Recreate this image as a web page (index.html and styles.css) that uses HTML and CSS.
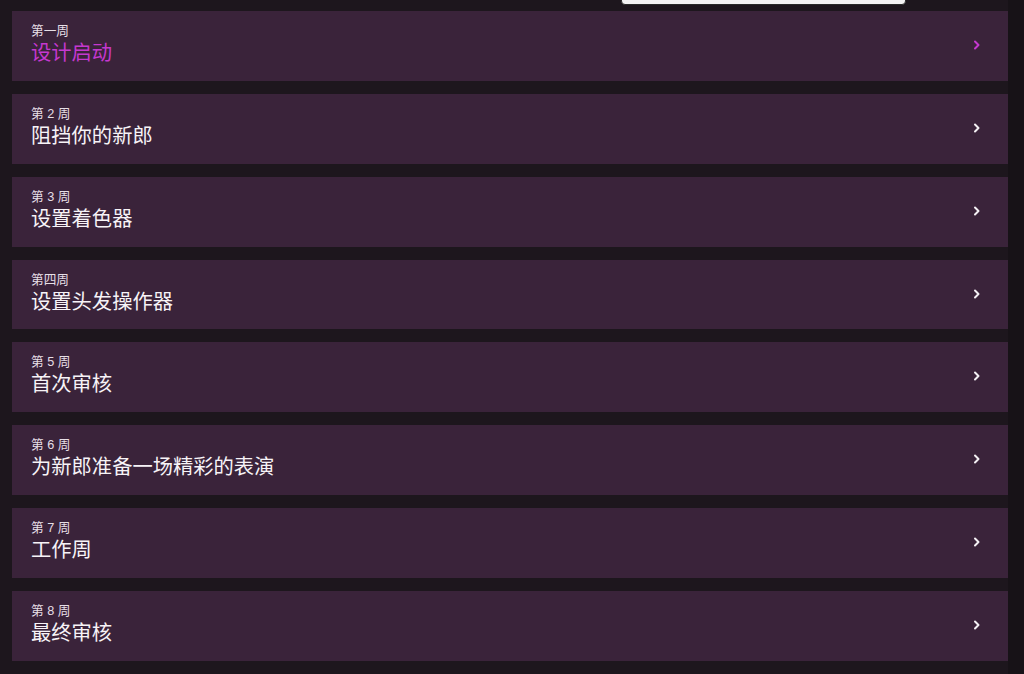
FILE: index.html
```html
<!DOCTYPE html>
<html lang="zh">
<head>
<meta charset="utf-8">
<link rel="stylesheet" href="styles.css">
</head>
<body>
<div class="topbar"></div>
<div class="page">
  <main class="list">
    <a class="item active"><div class="text"><div class="label">第一周</div><div class="title">设计启动</div></div><svg class="chev" viewBox="0 0 8 10"><path d="M2 1.5 L5.5 5 L2 8.5" /></svg></a>
    <a class="item"><div class="text"><div class="label">第 2 周</div><div class="title">阻挡你的新郎</div></div><svg class="chev" viewBox="0 0 8 10"><path d="M2 1.5 L5.5 5 L2 8.5" /></svg></a>
    <a class="item"><div class="text"><div class="label">第 3 周</div><div class="title">设置着色器</div></div><svg class="chev" viewBox="0 0 8 10"><path d="M2 1.5 L5.5 5 L2 8.5" /></svg></a>
    <a class="item"><div class="text"><div class="label">第四周</div><div class="title">设置头发操作器</div></div><svg class="chev" viewBox="0 0 8 10"><path d="M2 1.5 L5.5 5 L2 8.5" /></svg></a>
    <a class="item"><div class="text"><div class="label">第 5 周</div><div class="title">首次审核</div></div><svg class="chev" viewBox="0 0 8 10"><path d="M2 1.5 L5.5 5 L2 8.5" /></svg></a>
    <a class="item"><div class="text"><div class="label">第 6 周</div><div class="title">为新郎准备一场精彩的表演</div></div><svg class="chev" viewBox="0 0 8 10"><path d="M2 1.5 L5.5 5 L2 8.5" /></svg></a>
    <a class="item"><div class="text"><div class="label">第 7 周</div><div class="title">工作周</div></div><svg class="chev" viewBox="0 0 8 10"><path d="M2 1.5 L5.5 5 L2 8.5" /></svg></a>
    <a class="item"><div class="text"><div class="label">第 8 周</div><div class="title">最终审核</div></div><svg class="chev" viewBox="0 0 8 10"><path d="M2 1.5 L5.5 5 L2 8.5" /></svg></a>
  </main>
  <div class="scrollstrip"></div>
</div>
</body>
</html>
```
FILE: styles.css
```css
html, body {
  margin: 0;
  padding: 0;
  background: #1d161d;
  height: 100%;
  overflow: hidden;
}
body {
  font-family: "Liberation Sans", "Noto Sans CJK SC", sans-serif;
  position: relative;
}
.topbar {
  position: absolute;
  left: 621px;
  top: -4px;
  width: 283px;
  height: 7px;
  background: #f4f3f4;
  border: 1px solid #2a2a2a;
  border-radius: 0 0 4px 4px;
  z-index: 2;
}
.page {
  display: flex;
  height: 100%;
}
.list {
  flex: 1;
  display: flex;
  flex-direction: column;
  gap: 13px;
  padding: 11px 0 0 12px;
}
.scrollstrip {
  width: 16px;
  background: #171217;
}
.item {
  display: flex;
  align-items: center;
  height: 69.86px;
  flex: none;
  box-sizing: border-box;
  background: #3a233a;
  padding: 0 27px 0 19px;
  color: #f2eef2;
  text-decoration: none;
}
.text {
  flex: 1;
  display: flex;
  flex-direction: column;
  margin-top: -3px;
}
.label {
  font-size: 12.7px;
  line-height: 17px;
  color: #e6dfe6;
}
.title {
  font-size: 20.3px;
  line-height: 26px;
  color: #f7f3f7;
}
.chev {
  width: 8px;
  height: 10px;
  margin-top: -2px;
  fill: none;
  stroke: #f4f0f4;
  stroke-width: 2;
  stroke-linecap: round;
  stroke-linejoin: round;
}
.item.active .title { color: #c538cf; }
.item.active .chev { stroke: #c538cf; }
```
